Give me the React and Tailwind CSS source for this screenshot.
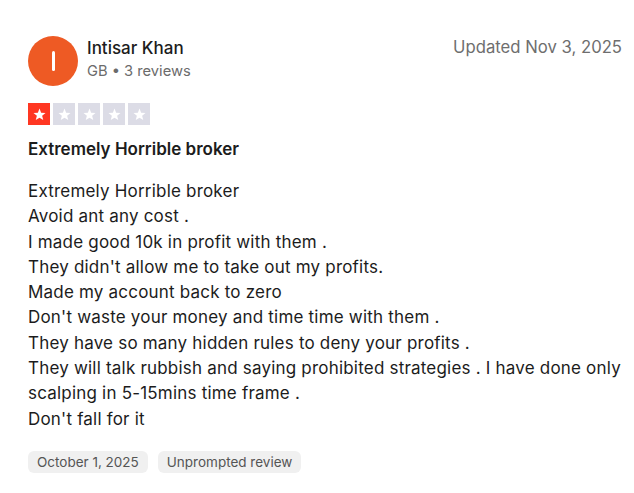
const Star = ({ filled }) => (
    <div className={`w-[22px] h-[22px] flex items-center justify-center ${filled ? "bg-[#ff3722]" : "bg-[#dcdce6]"}`}>
        <svg viewBox="0 0 24 24" className="w-[15px] h-[15px]" fill="#ffffff">
            <path d="M12 2.5l2.6 6.6 7 .4-5.4 4.5 1.8 6.9L12 17.1l-6 3.8 1.8-6.9L2.4 9.5l7-.4z" />
        </svg>
    </div>
);

const lines = [
    "Extremely Horrible broker",
    "Avoid ant any cost .",
    "I made good 10k in profit with them .",
    "They didn't allow me to take out my profits.",
    "Made my account back to zero",
    "Don't waste your money and time time with them .",
    "They have so many hidden rules to deny your profits .",
    "They will talk rubbish and saying prohibited strategies . I have done only scalping in 5-15mins time frame .",
    "Don't fall for it",
];

export default function App() {
    return (
        <div className="w-[634px] h-[493px] bg-white font-['Inter',sans-serif] text-[#1c1c1c] pl-7 pr-3 pt-[36px] overflow-hidden">
            <div className="flex justify-between items-start">
                <div className="flex items-center gap-[9px]">
                    <div className="w-[50px] h-[50px] rounded-full bg-[#ee5a24] flex items-center justify-center">
                        <div className="w-[3px] h-[20px] bg-white rounded-full" />
                    </div>
                    <div className="flex flex-col">
                        <span className="text-[17px] leading-[22px] font-medium -mt-[2px]">Intisar Khan</span>
                        <span className="text-[14.7px] leading-[24px] text-[#6b6b6b]">GB • 3 reviews</span>
                    </div>
                </div>
                <span className="text-[16.7px] leading-[20px] text-[#6e6e6e] mt-[1px]">Updated Nov 3, 2025</span>
            </div>
            <div className="flex gap-[3px] mt-[17px]">
                <Star filled />
                <Star />
                <Star />
                <Star />
                <Star />
            </div>
            <h2 className="text-[17px] leading-[24px] font-semibold mt-[12px]">Extremely Horrible broker</h2>
            <div className="mt-[18px] text-[17px] leading-[25.3px] tracking-[0.2px]">
                {lines.map((l, i) => (
                    <p key={i}>{l}</p>
                ))}
            </div>
            <div className="flex gap-[10px] mt-[19px]">
                <span className="bg-[#f0f0f0] rounded-md px-[9px] h-[22px] flex items-center text-[13.5px] text-[#555]">October 1, 2025</span>
                <span className="bg-[#f0f0f0] rounded-md px-[9px] h-[22px] flex items-center text-[13.5px] text-[#555]">Unprompted review</span>
            </div>
        </div>
    );
}
